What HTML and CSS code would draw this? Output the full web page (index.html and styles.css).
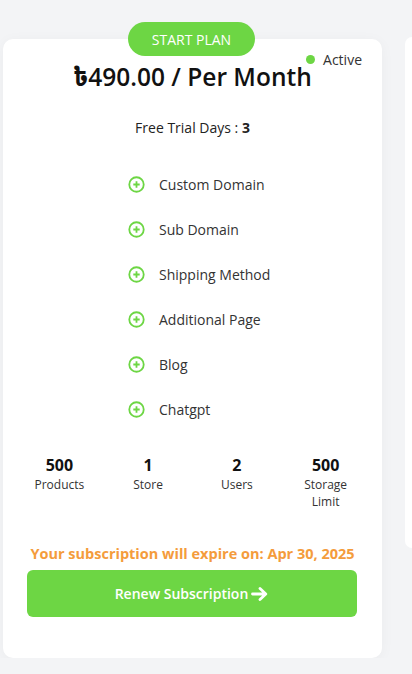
FILE: index.html
```html
<!DOCTYPE html>
<html>
<head>
<meta charset="utf-8">
<link rel="stylesheet" href="styles.css">
</head>
<body>
<div class="row">
  <div class="card">
    <div class="badge">START PLAN</div>
    <div class="status"><span class="dot"></span>Active</div>
    <h2 class="price"><span class="taka">৳</span>490.00 / Per Month</h2>
    <p class="trial">Free Trial Days : <b>3</b></p>
    <ul class="features">
      <li><svg class="ic" viewBox="0 0 16 16"><circle cx="8" cy="8" r="6.8" fill="none" stroke="#6dd644" stroke-width="1.7"/><path d="M8 5v6M5 8h6" stroke="#6dd644" stroke-width="1.7"/></svg>Custom Domain</li>
      <li><svg class="ic" viewBox="0 0 16 16"><circle cx="8" cy="8" r="6.8" fill="none" stroke="#6dd644" stroke-width="1.7"/><path d="M8 5v6M5 8h6" stroke="#6dd644" stroke-width="1.7"/></svg>Sub Domain</li>
      <li><svg class="ic" viewBox="0 0 16 16"><circle cx="8" cy="8" r="6.8" fill="none" stroke="#6dd644" stroke-width="1.7"/><path d="M8 5v6M5 8h6" stroke="#6dd644" stroke-width="1.7"/></svg>Shipping Method</li>
      <li><svg class="ic" viewBox="0 0 16 16"><circle cx="8" cy="8" r="6.8" fill="none" stroke="#6dd644" stroke-width="1.7"/><path d="M8 5v6M5 8h6" stroke="#6dd644" stroke-width="1.7"/></svg>Additional Page</li>
      <li><svg class="ic" viewBox="0 0 16 16"><circle cx="8" cy="8" r="6.8" fill="none" stroke="#6dd644" stroke-width="1.7"/><path d="M8 5v6M5 8h6" stroke="#6dd644" stroke-width="1.7"/></svg>Blog</li>
      <li><svg class="ic" viewBox="0 0 16 16"><circle cx="8" cy="8" r="6.8" fill="none" stroke="#6dd644" stroke-width="1.7"/><path d="M8 5v6M5 8h6" stroke="#6dd644" stroke-width="1.7"/></svg>Chatgpt</li>
    </ul>
    <div class="stats">
      <div class="stat"><div class="num">500</div><div class="lbl">Products</div></div>
      <div class="stat"><div class="num">1</div><div class="lbl">Store</div></div>
      <div class="stat"><div class="num">2</div><div class="lbl">Users</div></div>
      <div class="stat"><div class="num">500</div><div class="lbl">Storage<br>Limit</div></div>
    </div>
    <p class="expire">Your subscription will expire on: Apr 30, 2025</p>
    <button class="renew">Renew Subscription <svg class="arrow" viewBox="0 0 18 16"><path d="M1.5 8h13M9 2.5 14.8 8 9 13.5" fill="none" stroke="#fff" stroke-width="2.8" stroke-linecap="round" stroke-linejoin="round"/></svg></button>
  </div>
  <div class="card-next"></div>
</div>
</body>
</html>
```

FILE: styles.css
```css
* { box-sizing: border-box; }
html, body { margin: 0; padding: 0; }
body {
  background: #f3f4f6;
  font-family: "Open Sans", "Noto Sans", sans-serif;
  color: #2b2b2b;
  width: 412px;
  height: 674px;
  overflow: hidden;
}
.row {
  display: flex;
  gap: 23px;
  padding: 39px 0 0 3px;
  align-items: flex-start;
  width: 412px;
  overflow: hidden;
}
.card {
  position: relative;
  flex: 0 0 379px;
  background: #fff;
  border-radius: 10px;
  box-shadow: 0 2px 14px rgba(0, 0, 0, 0.04);
  padding: 22px 0 41px;
}
.card-next {
  flex: 1 1 auto;
  min-width: 0;
  height: 511px;
  margin-top: -2px;
  background: #fff;
  border-radius: 10px 0 0 10px;
}
.badge {
  position: absolute;
  top: -17px;
  left: 125px;
  width: 127px;
  height: 34px;
  border-radius: 17px;
  background: #6dd644;
  color: #fff;
  font-size: 14px;
  font-weight: 500;
  display: flex;
  align-items: center;
  justify-content: center;
}
.status {
  position: absolute;
  top: 11px;
  right: 20px;
  display: flex;
  align-items: center;
  gap: 8px;
  font-size: 14px;
  color: #333;
}
.dot {
  width: 9px;
  height: 9px;
  border-radius: 50%;
  background: #6dd644;
}
.price {
  margin: 0;
  text-align: center;
  font-size: 24.5px;
  line-height: 32px;
  font-weight: 600;
  color: #111;
}
.taka { font-family: "Noto Sans Bengali", "DejaVu Sans", sans-serif; font-weight: 700; }
.trial {
  margin: 22px 0 0;
  text-align: center;
  font-size: 14px;
  line-height: 20px;
  color: #222;
}
.trial b { font-weight: 700; }
.features {
  list-style: none;
  margin: 24px 0 0;
  padding: 0 0 0 125px;
}
.features li {
  height: 45px;
  display: flex;
  align-items: center;
  gap: 14px;
  font-size: 14px;
  color: #333;
}
.ic { width: 17px; height: 17px; flex: none; }
.stats {
  margin: 22px 12px 0;
  display: grid;
  grid-template-columns: repeat(4, 1fr);
  text-align: center;
}
.num {
  font-size: 16px;
  font-weight: 700;
  line-height: 22px;
  color: #111;
}
.lbl {
  font-size: 12px;
  line-height: 17px;
  color: #333;
}
.expire {
  margin: 33px 0 0;
  text-align: center;
  font-size: 14.5px;
  line-height: 22px;
  font-weight: 700;
  color: #f49c3c;
}
.renew {
  display: flex;
  align-items: center;
  justify-content: center;
  gap: 3px;
  margin: 5px 25px 0 24px;
  width: 330px;
  height: 47px;
  border: 0;
  border-radius: 6px;
  background: #6dd644;
  color: #fff;
  font-family: inherit;
  font-size: 14px;
  font-weight: 600;
}
.arrow { width: 18px; height: 16px; }
```
